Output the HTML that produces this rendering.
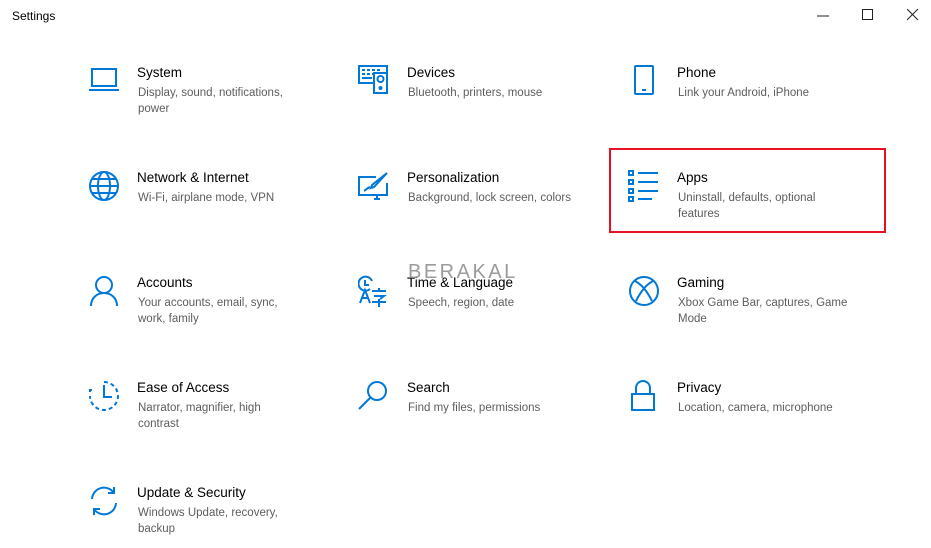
<!DOCTYPE html>
<html><head><meta charset="utf-8"><style>
body{margin:0;width:931px;height:548px;background:#fff;font-family:"Liberation Sans",sans-serif;position:relative;overflow:hidden}
.t{position:absolute;left:12px;top:9px;font-size:12px;color:#000}
.it{position:absolute;width:250px}
.it svg{position:absolute;left:0;top:0;width:32px;height:32px}
.it .h{position:absolute;left:49px;top:0;font-size:13.5px;color:#000;white-space:nowrap}
.it .d{position:absolute;left:50px;top:20px;font-size:11.5px;color:#5d5d5d;line-height:16px;width:185px}
svg *{fill:none;stroke:#0078d7;stroke-width:2}
.sel{position:absolute;left:609px;top:148px;width:273px;height:81px;border:2px solid #e81123}
.wm{position:absolute;left:408px;top:261px;font-size:20px;color:#8a8a8a;letter-spacing:2.5px;opacity:.85}
</style></head><body>
<div class="t">Settings</div>
<svg style="position:absolute;left:817px;top:15px" width="12" height="2"><line x1="0" y1="1" x2="12" y2="1" style="stroke:#222;stroke-width:1"/></svg>
<svg style="position:absolute;left:862px;top:9px" width="12" height="12"><rect x=".5" y=".5" width="10" height="10" style="stroke:#222;stroke-width:1"/></svg>
<svg style="position:absolute;left:907px;top:9px" width="12" height="12"><path d="M0 0L11 11M11 0L0 11" style="stroke:#222;stroke-width:1"/></svg>

<div class="it" style="left:88px;top:65px"><svg viewBox="0 0 32 32"><rect x="4" y="4" width="24" height="17"/><path d="M1 25h30"/></svg><div class="h">System</div><div class="d" style="width:160px">Display, sound, notifications, power</div></div>
<div class="it" style="left:358px;top:65px"><svg viewBox="0 0 32 32"><path d="M15 18H1V1h28v6"/><path d="M4 5h3M9 5h3M14 5h3M19 5h3M4 9h3M9 9h3M14 9h3M4 13h10"/><rect x="16" y="8" width="13" height="20"/><circle cx="22.5" cy="14" r="3"/><circle cx="22.5" cy="23" r="1"/></svg><div class="h">Devices</div><div class="d">Bluetooth, printers, mouse</div></div>
<div class="it" style="left:628px;top:65px"><svg viewBox="0 0 32 32"><rect x="7" y="1" width="18" height="28" rx="1"/><path d="M14 25h4"/></svg><div class="h">Phone</div><div class="d">Link your Android, iPhone</div></div>

<div class="it" style="left:88px;top:170px"><svg viewBox="0 0 32 32"><circle cx="16" cy="16" r="14"/><ellipse cx="16" cy="16" rx="6" ry="14"/><path d="M2 16h28M4 9h24M4 23h24"/></svg><div class="h">Network &amp; Internet</div><div class="d">Wi-Fi, airplane mode, VPN</div></div>
<div class="it" style="left:358px;top:170px"><svg viewBox="0 0 32 32"><path d="M18 7H1v18h28V13"/><path d="M16 29h6M19 25v4"/><path d="M29 3L16 17l-3 1 1-3z"/><path d="M6 21c2-1 3-3 6-4"/></svg><div class="h">Personalization</div><div class="d" style="width:200px">Background, lock screen, colors</div></div>
<div class="it" style="left:628px;top:170px"><svg viewBox="0 0 32 32"><path d="M1 1h4v4H1zM1 10h4v4H1zM1 19h4v4H1zM1 27h4v4H1zM10 3h20M10 12h20M10 21h20M10 29h14"/></svg><div class="h">Apps</div><div class="d" style="width:160px">Uninstall, defaults, optional features</div></div>

<div class="it" style="left:88px;top:275px"><svg viewBox="0 0 32 32"><circle cx="16" cy="10" r="8"/><path d="M3 31c0-8 6-13 13-13s13 5 13 13"/></svg><div class="h">Accounts</div><div class="d" style="width:160px">Your accounts, email, sync, work, family</div></div>
<div class="it" style="left:358px;top:275px"><svg viewBox="0 0 32 32"><path d="M12 14A7 7 0 1 1 14 6"/><path d="M7 5v5h4"/><path d="M2 28l5-13 5 13M4 23h6"/><path d="M14 16h14M21 13v3M16 21h10l-4 3M21 24v8M14 27h14"/></svg><div class="h">Time &amp; Language</div><div class="d">Speech, region, date</div></div>
<div class="it" style="left:628px;top:275px"><svg viewBox="0 0 32 32"><circle cx="16" cy="16" r="14"/><path d="M7 6c6 3 12 10 17 20M25 6C19 9 13 16 8 26"/></svg><div class="h">Gaming</div><div class="d" style="width:180px">Xbox Game Bar, captures, Game Mode</div></div>

<div class="it" style="left:88px;top:380px"><svg viewBox="0 0 32 32"><path d="M16 2a14 14 0 1 1-14 14" stroke-dasharray="4 3"/><path d="M16 5v12h8"/><path d="M2 12v-2h2"/></svg><div class="h">Ease of Access</div><div class="d" style="width:150px">Narrator, magnifier, high contrast</div></div>
<div class="it" style="left:358px;top:380px"><svg viewBox="0 0 32 32"><circle cx="19" cy="11" r="9"/><path d="M13 17L1 29"/></svg><div class="h">Search</div><div class="d">Find my files, permissions</div></div>
<div class="it" style="left:628px;top:380px"><svg viewBox="0 0 32 32"><rect x="4" y="14" width="22" height="16"/><path d="M8 14V8a7 7 0 0 1 14 0v6"/></svg><div class="h">Privacy</div><div class="d">Location, camera, microphone</div></div>

<div class="it" style="left:88px;top:485px"><svg viewBox="0 0 32 32"><path d="M4 14A12 12 0 0 1 26 8M28 18A12 12 0 0 1 6 24"/><path d="M26 2v6h-6M6 30v-6h6"/></svg><div class="h">Update &amp; Security</div><div class="d" style="width:160px">Windows Update, recovery, backup</div></div>

<div class="sel"></div>
<div class="wm">BERAKAL</div>
</body></html>
